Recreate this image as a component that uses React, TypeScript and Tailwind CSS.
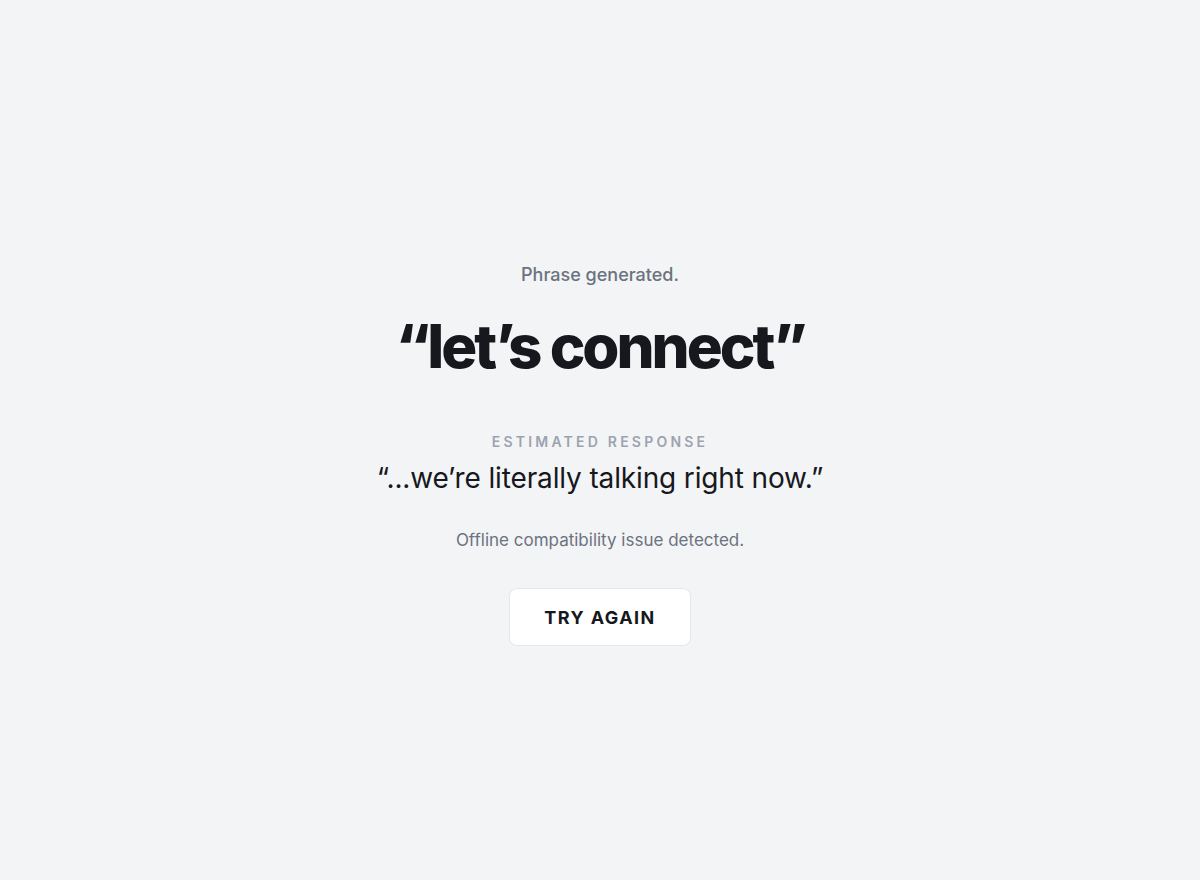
import React from 'react';

const font = { fontFamily: 'Inter, "Noto Sans", sans-serif' };

export default function App() {
  return (
    <div
      className="min-h-screen w-full bg-[#f3f4f6] flex flex-col items-center text-center pt-[263px]"
      style={font}
    >
      <p className="text-[18px] leading-[24px] font-medium text-[#6b7280]">Phrase generated.</p>

      <h1 className="mt-[23px] text-[60px] leading-[72px] font-extrabold tracking-[-0.05em] text-[#16181d]">
        “let’s connect”
      </h1>

      <p className="mt-[50px] text-[14px] leading-[20px] font-semibold tracking-[0.23em] text-[#9ca3af]">
        ESTIMATED RESPONSE
      </p>
      <p className="mt-[8px] text-[28px] leading-[36px] font-normal tracking-[-0.005em] text-[#16181d]">
        “...we’re literally talking right now.”
      </p>

      <p className="mt-[32px] text-[17px] leading-[24px] text-[#6b7280]">
        Offline compatibility issue detected.
      </p>

      <button className="mt-[36px] w-[182px] h-[58px] bg-white border border-[#e5e7eb] rounded-lg text-[18px] font-bold tracking-[0.08em] text-[#16181d]">
        TRY AGAIN
      </button>
    </div>
  );
}
